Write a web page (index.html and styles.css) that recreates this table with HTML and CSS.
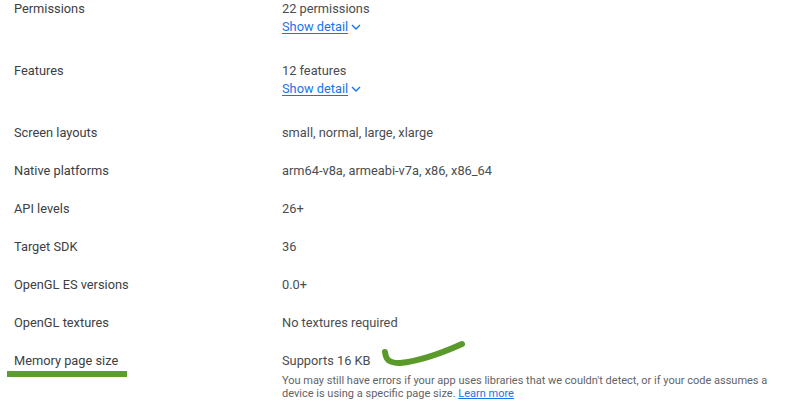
FILE: index.html
```html
<!DOCTYPE html>
<html>
<head>
  <link rel="stylesheet" href="styles.css">
</head>
<body>
  <div class="details">
    <div class="row">
      <div class="label">Permissions</div>
      <div class="value">
        <div>22 permissions</div>
        <a class="show-detail" href="#">Show detail
          <svg class="chevron" viewBox="0 0 12 12"><path d="M2 4l4 4 4-4"/></svg>
        </a>
      </div>
    </div>
    <div class="row">
      <div class="label">Features</div>
      <div class="value">
        <div>12 features</div>
        <a class="show-detail" href="#">Show detail
          <svg class="chevron" viewBox="0 0 12 12"><path d="M2 4l4 4 4-4"/></svg>
        </a>
      </div>
    </div>
    <div class="row">
      <div class="label">Screen layouts</div>
      <div class="value">small, normal, large, xlarge</div>
    </div>
    <div class="row">
      <div class="label">Native platforms</div>
      <div class="value">arm64-v8a, armeabi-v7a, x86, x86_64</div>
    </div>
    <div class="row">
      <div class="label">API levels</div>
      <div class="value">26+</div>
    </div>
    <div class="row">
      <div class="label">Target SDK</div>
      <div class="value">36</div>
    </div>
    <div class="row">
      <div class="label">OpenGL ES versions</div>
      <div class="value">0.0+</div>
    </div>
    <div class="row">
      <div class="label">OpenGL textures</div>
      <div class="value">No textures required</div>
    </div>
    <div class="row">
      <div class="label marked">Memory page size</div>
      <div class="value">
        <div class="supports">Supports 16 KB
          <svg class="tick" viewBox="0 0 90 30"><path d="M5 12C6 20 9 23 20 23C40 21 62 13 82 4"/></svg>
        </div>
        <p class="note">You may still have errors if your app uses libraries that we couldn't detect, or if your code assumes a device is using a specific page size. <a href="#">Learn more</a></p>
      </div>
    </div>
  </div>
</body>
</html>
```

FILE: styles.css
```css
* {
  box-sizing: border-box;
  margin: 0;
  padding: 0;
}

body {
  background: #ffffff;
  font-family: Roboto, 'Noto Sans', sans-serif;
  font-size: 12.8px;
  color: #3c4043;
  overflow: hidden;
}

.details {
  margin-top: -10px;
  padding-left: 14px;
}

.row {
  display: grid;
  grid-template-columns: 268px 1fr;
  padding: 10px 0;
  line-height: 18px;
}

.label {
  color: #3c4043;
  position: relative;
  justify-self: start;
}

.label.marked::after {
  content: '';
  position: absolute;
  left: -7px;
  right: -9px;
  top: 19px;
  height: 6px;
  background: #5c9e2e;
}

.value {
  color: #4a4d50;
}

.show-detail {
  display: flex;
  width: fit-content;
  height: 18px;
  align-items: center;
  gap: 2px;
  color: #1a73e8;
  text-decoration: underline;
  text-underline-offset: 2px;
  margin-bottom: 6px;
}

.chevron {
  width: 12px;
  height: 12px;
  fill: none;
  stroke: #1a73e8;
  stroke-width: 1.4;
}

.supports {
  position: relative;
}

.tick {
  position: absolute;
  left: 98px;
  top: -12px;
  width: 90px;
  height: 30px;
  fill: none;
  stroke: #5a9a2a;
  stroke-width: 6;
  stroke-linecap: round;
}

.note {
  font-size: 11px;
  line-height: 13px;
  margin-top: 4px;
  color: #5f6368;
  padding-right: 8px;
}

.note a {
  color: #1a73e8;
}
```
